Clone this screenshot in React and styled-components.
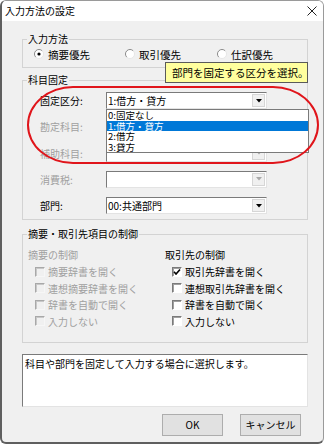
import React from 'react'
import styled, { createGlobalStyle } from 'styled-components'

const GlobalStyle = createGlobalStyle`
  html, body {
    margin: 0;
    padding: 0;
    background: #ffffff;
  }
  body {
    font-family: "Noto Sans CJK JP", "Noto Sans", sans-serif;
    font-size: 10px;
    color: #000000;
  }
`

const Window = styled.div`
  position: relative;
  box-sizing: border-box;
  width: 324px;
  height: 444px;
  display: flex;
  flex-direction: column;
  background: #f0f0f0;
  border: 1px solid #9a9a9a;
  border-left: 2px solid #5f5f5f;
  border-bottom: 2px solid #5f5f5f;
  border-radius: 6px;
  overflow: hidden;
`

const TitleBar = styled.div`
  display: flex;
  align-items: center;
  height: 20px;
  padding: 0 6px 0 3px;
  background: #ffffff;
  font-size: 10px;
`

const TitleText = styled.span`
  flex: 1;
  line-height: 20px;
`

const Body = styled.div`
  display: flex;
  flex-direction: column;
  padding: 12px 15px 0 20px;
`

const Group = styled.fieldset`
  margin: ${p => p.$mt || 0}px 0 0;
  padding: 0;
  min-width: 0;
  border: 1px solid #d3d3d3;
`

const Legend = styled.legend`
  margin-left: 4px;
  padding: 0 1px;
  line-height: 12px;
  font-size: 10px;
`

const RadioRow = styled.div`
  display: grid;
  grid-template-columns: 91px 92px 1fr;
  padding: 2px 0 6px 11px;
`

const RadioItem = styled.label`
  display: flex;
  align-items: center;
  gap: 4px;
  height: 14px;
  font-size: 10.5px;
`

const FieldGrid = styled.div`
  display: grid;
  grid-template-columns: 66px 161px;
  row-gap: 9.25px;
  padding: 6px 0 5px 17px;
`

const FieldLabel = styled.span`
  line-height: 17px;
  color: ${p => (p.$disabled ? '#a0a0a0' : '#000000')};
`

const Combo = styled.div`
  position: relative;
  box-sizing: border-box;
  display: flex;
  align-items: center;
  height: 17px;
  padding-left: 1px;
  background: #ffffff;
  border: 1px solid;
  border-color: #7a7a7a #e3e3e3 #e3e3e3 #7a7a7a;
  line-height: 15px;
`

const ArrowBtn = styled.span`
  display: flex;
  align-items: center;
  justify-content: center;
  box-sizing: border-box;
  width: 13px;
  height: 13px;
  margin: 0 1px 0 auto;
  background: #f0f0f0;
  border: 1px solid #d6d6d6;
`

const DropList = styled.ul`
  position: absolute;
  top: 16px;
  left: -1px;
  z-index: 2;
  box-sizing: border-box;
  width: 203px;
  margin: 0;
  padding: 0;
  list-style: none;
  background: #ffffff;
  border: 1px solid #7a7a7a;
`

const DropItem = styled.li`
  height: 10.5px;
  padding-left: 1px;
  font-size: 9.5px;
  line-height: 10.5px;
  white-space: nowrap;
  background: ${p => (p.$active ? '#0078d7' : 'transparent')};
  color: ${p => (p.$active ? '#ffffff' : '#000000')};
`

const CtrlGrid = styled.div`
  display: grid;
  grid-template-columns: 137px 1fr;
  padding: 7px 0 12px 5px;
`

const CtrlColumn = styled.div`
  display: flex;
  flex-direction: column;
`

const CtrlHead = styled.span`
  height: 16.5px;
  line-height: 16.5px;
  color: ${p => (p.$disabled ? '#a0a0a0' : '#000000')};
`

const CheckRow = styled.label`
  display: flex;
  align-items: center;
  gap: 3px;
  height: 16.5px;
  padding-left: 7px;
  color: ${p => (p.$disabled ? '#a0a0a0' : '#000000')};
`

const Box = styled.span`
  display: flex;
  align-items: center;
  justify-content: center;
  box-sizing: border-box;
  width: 10px;
  height: 10px;
  border: 1px solid;
  border-color: ${p =>
    p.$disabled ? '#a8a8a8 #f6f6f6 #f6f6f6 #a8a8a8' : '#7a7a7a #ffffff #ffffff #7a7a7a'};
  background: ${p => (p.$disabled ? '#f0f0f0' : '#ffffff')};
  box-shadow: inset 1px 1px 0 ${p => (p.$disabled ? '#c8c8c8' : '#a0a0a0')};
`

const Note = styled.div`
  box-sizing: border-box;
  height: 53px;
  margin-top: 11px;
  padding: 2px 2px;
  background: #ffffff;
  border: 1px solid;
  border-color: #7a7a7a #e3e3e3 #e3e3e3 #7a7a7a;
  line-height: 13px;
`

const ButtonBar = styled.div`
  display: flex;
  justify-content: flex-end;
  gap: 17px;
  margin-top: 7px;
  padding-right: 7px;
`

const Button = styled.button`
  box-sizing: border-box;
  width: ${p => p.$w}px;
  height: 22px;
  padding: 0;
  font-family: inherit;
  font-size: 10px;
  color: #000000;
  background: #e1e1e1;
  border: 1px solid #adadad;
`

const Tooltip = styled.div`
  position: absolute;
  top: 61px;
  left: 163px;
  z-index: 3;
  box-sizing: border-box;
  width: 143px;
  height: 21px;
  padding-left: 6px;
  background: #ffff9e;
  border: 1px solid #5a5a5a;
  font-size: 10.5px;
  line-height: 19px;
  white-space: nowrap;
`

const Annotation = styled.div`
  position: absolute;
  top: 85px;
  left: 25px;
  z-index: 4;
  box-sizing: border-box;
  width: 292px;
  height: 78px;
  border: 2.75px solid #e0151b;
  border-radius: 46px / 39px;
  pointer-events: none;
`

const CloseIcon = () => (
  <svg width="10" height="10" viewBox="0 0 10 10">
    <path d="M0.5 0.5 L9.5 9.5 M9.5 0.5 L0.5 9.5" stroke="#222" strokeWidth="1" fill="none" />
  </svg>
)

const Radio = ({ checked }) => (
  <svg width="10" height="10" viewBox="0 0 10 10">
    <circle cx="5" cy="5" r="4.5" fill="#ffffff" />
    <path d="M1.8 8.2 A4.5 4.5 0 0 1 8.2 1.8" stroke="#8a8a8a" strokeWidth="1" fill="none" />
    <path d="M8.2 1.8 A4.5 4.5 0 0 1 1.8 8.2" stroke="#e6e6e6" strokeWidth="1" fill="none" />
    {checked && <circle cx="5" cy="5" r="1.6" fill="#000000" />}
  </svg>
)

const Arrow = ({ disabled }) => (
  <svg width="6" height="4" viewBox="0 0 6 4">
    <path d="M0 0 L6 0 L3 3.5 Z" fill={disabled ? '#a8a8a8' : '#000000'} />
  </svg>
)

const Check = () => (
  <svg width="8" height="8" viewBox="0 0 8 8">
    <path d="M1 3.8 L3 6 L7 1.5" stroke="#000" strokeWidth="1.6" fill="none" />
  </svg>
)

const CheckBox = ({ label, checked, disabled }) => (
  <CheckRow $disabled={disabled}>
    <Box $disabled={disabled}>{checked && <Check />}</Box>
    {label}
  </CheckRow>
)

const ComboBox = ({ value, disabled, children }) => (
  <Combo>
    <span>{value}</span>
    <ArrowBtn>
      <Arrow disabled={disabled} />
    </ArrowBtn>
    {children}
  </Combo>
)

const listItems = ['0:固定なし', '1:借方・貸方', '2:借方', '3:貸方']

const App = () => (
  <>
    <GlobalStyle />
    <Window>
      <TitleBar>
        <TitleText>入力方法の設定</TitleText>
        <CloseIcon />
      </TitleBar>
      <Body>
        <Group>
          <Legend>入力方法</Legend>
          <RadioRow>
            <RadioItem>
              <Radio checked />
              摘要優先
            </RadioItem>
            <RadioItem>
              <Radio />
              取引優先
            </RadioItem>
            <RadioItem>
              <Radio />
              仕訳優先
            </RadioItem>
          </RadioRow>
        </Group>

        <Group $mt={6}>
          <Legend>科目固定</Legend>
          <FieldGrid>
            <FieldLabel>固定区分:</FieldLabel>
            <ComboBox value="1:借方・貸方">
              <DropList>
                {listItems.map(item => (
                  <DropItem key={item} $active={item === '1:借方・貸方'}>
                    {item}
                  </DropItem>
                ))}
              </DropList>
            </ComboBox>
            <FieldLabel $disabled>勘定科目:</FieldLabel>
            <ComboBox disabled />
            <FieldLabel $disabled>補助科目:</FieldLabel>
            <ComboBox disabled />
            <FieldLabel $disabled>消費税:</FieldLabel>
            <ComboBox disabled />
            <FieldLabel>部門:</FieldLabel>
            <ComboBox value="00:共通部門" />
          </FieldGrid>
        </Group>

        <Group $mt={8}>
          <Legend>摘要・取引先項目の制御</Legend>
          <CtrlGrid>
            <CtrlColumn>
              <CtrlHead $disabled>摘要の制御</CtrlHead>
              <CheckBox disabled label="摘要辞書を開く" />
              <CheckBox disabled label="連想摘要辞書を開く" />
              <CheckBox disabled label="辞書を自動で開く" />
              <CheckBox disabled label="入力しない" />
            </CtrlColumn>
            <CtrlColumn>
              <CtrlHead>取引先の制御</CtrlHead>
              <CheckBox checked label="取引先辞書を開く" />
              <CheckBox label="連想取引先辞書を開く" />
              <CheckBox label="辞書を自動で開く" />
              <CheckBox label="入力しない" />
            </CtrlColumn>
          </CtrlGrid>
        </Group>

        <Note>科目や部門を固定して入力する場合に選択します。</Note>

        <ButtonBar>
          <Button $w={61}>OK</Button>
          <Button $w={61}>キャンセル</Button>
        </ButtonBar>
      </Body>

      <Tooltip>部門を固定する区分を選択。</Tooltip>
      <Annotation />
    </Window>
  </>
)

export default App
